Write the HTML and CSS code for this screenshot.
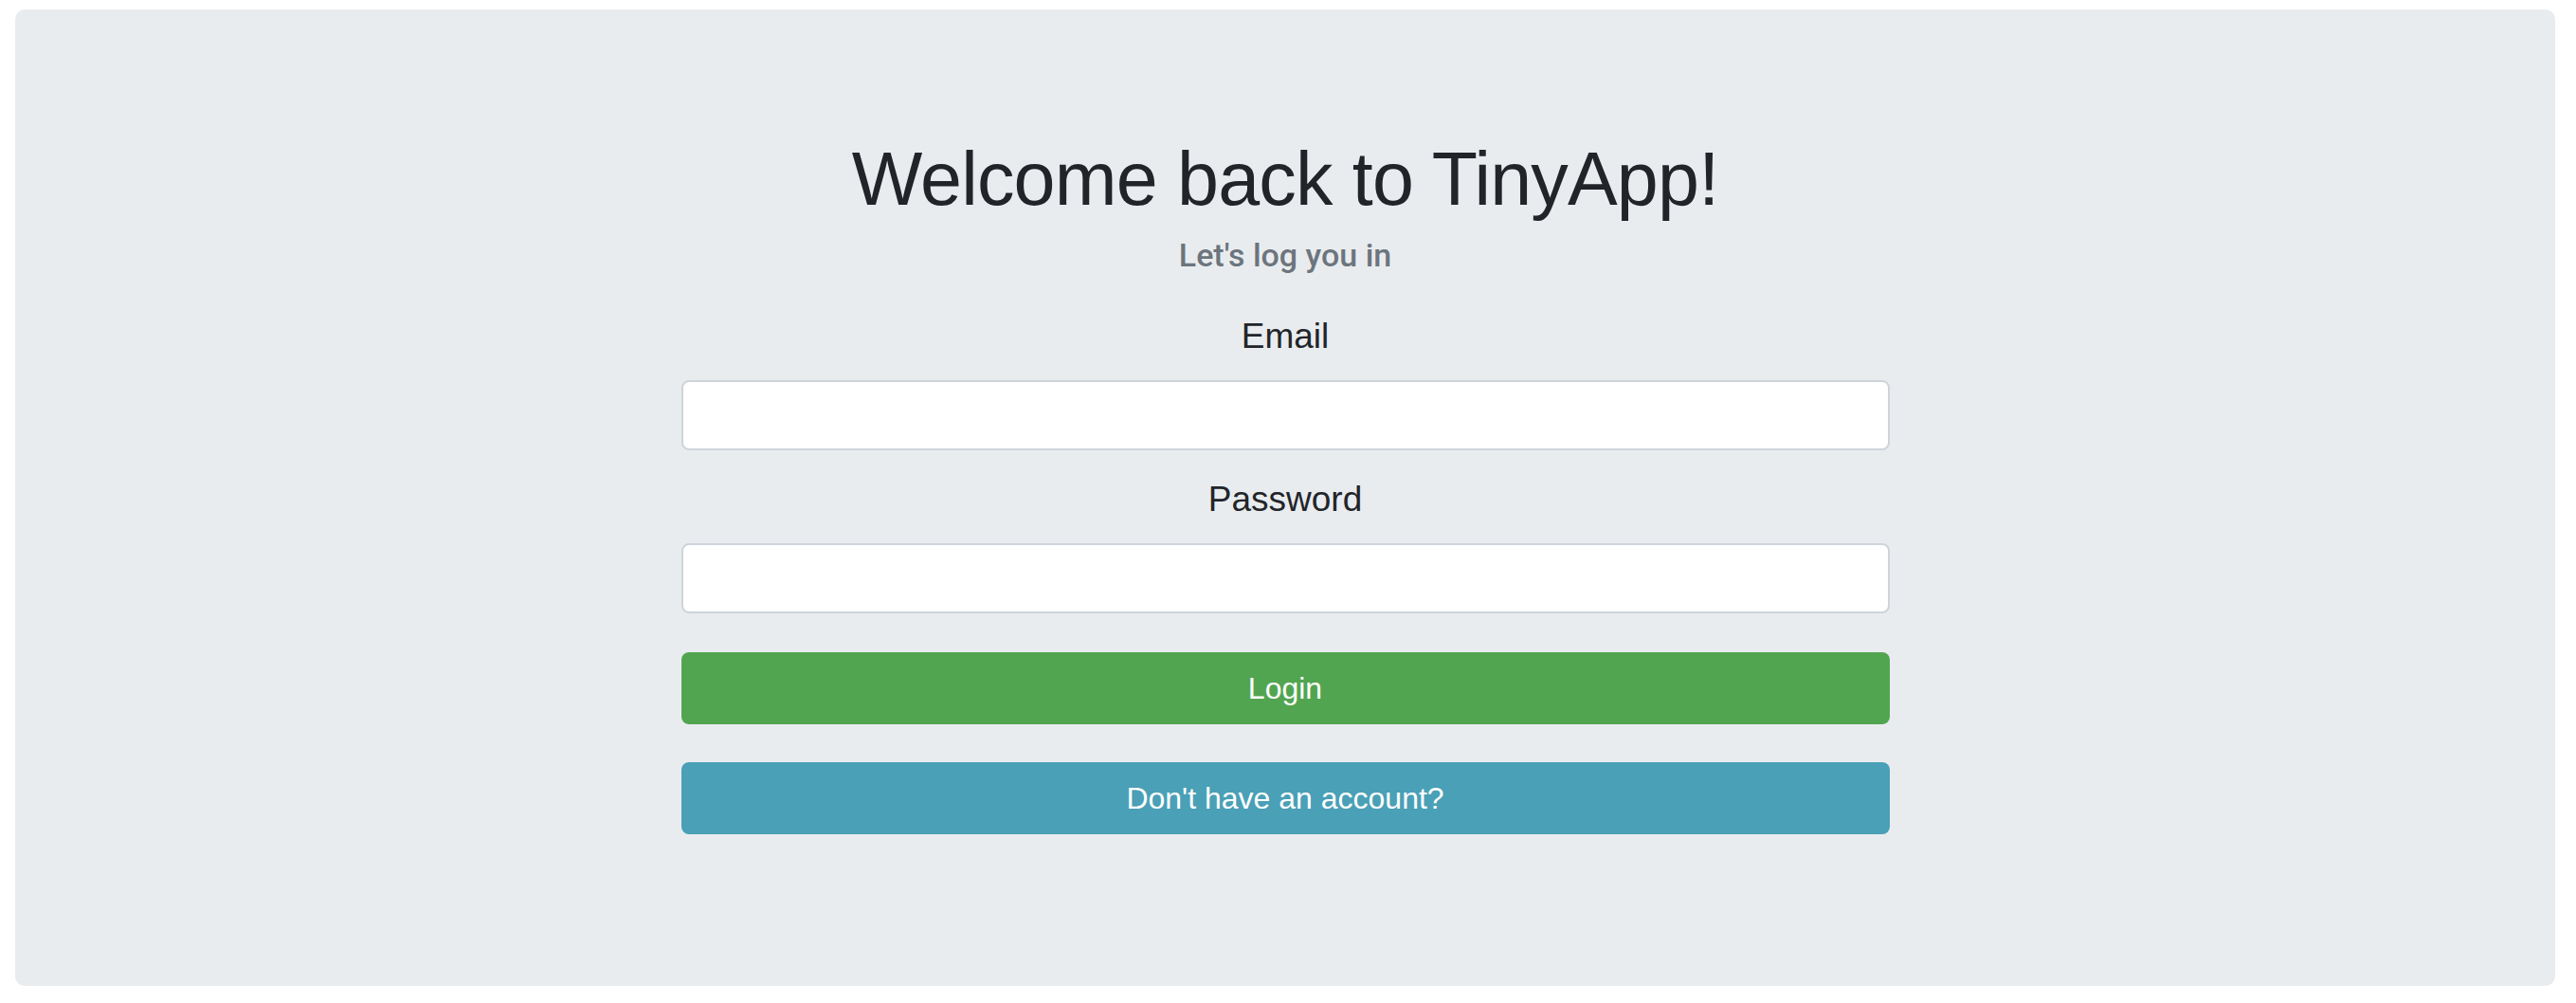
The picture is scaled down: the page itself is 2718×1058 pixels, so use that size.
FILE: index.html
```html
<!DOCTYPE html>
<html lang="en">
<head>
<meta charset="utf-8">
<title>TinyApp - Login</title>
<link rel="stylesheet" href="styles.css">
</head>
<body>
  <main class="jumbotron">
    <h1 class="title">Welcome back to TinyApp!</h1>
    <p class="subtitle">Let's log you in</p>
    <form class="login-form">
      <label class="field-label" for="email">Email</label>
      <input class="field-input" type="email" id="email" name="email">
      <label class="field-label field-label-next" for="password">Password</label>
      <input class="field-input" type="password" id="password" name="password">
      <button class="btn btn-success" type="submit">Login</button>
      <a class="btn btn-info" href="#">Don't have an account?</a>
    </form>
  </main>
</body>
</html>
```

FILE: styles.css
```css
html, body {
  margin: 0;
  padding: 0;
  background: #ffffff;
}

body {
  font-family: "Liberation Sans", Arial, sans-serif;
  color: #212529;
}

.jumbotron {
  box-sizing: border-box;
  margin: 10px 22px 0 16px;
  height: 1030px;
  padding: 132px 0 0;
  background: #e9ecef;
  border-radius: 10px;
  display: flex;
  flex-direction: column;
  align-items: center;
}

.title {
  margin: 0;
  font-size: 79px;
  line-height: 94px;
  font-weight: 400;
  letter-spacing: -0.8px;
  color: #212529;
}

.subtitle {
  margin: 8px 0 0;
  font-family: Roboto, "Liberation Sans", sans-serif;
  font-weight: 500;
  font-size: 34px;
  line-height: 50px;
  color: #6c757d;
}

.login-form {
  margin-top: 33px;
  width: 1275px;
  display: flex;
  flex-direction: column;
  align-items: stretch;
}

.field-label {
  display: block;
  text-align: center;
  font-size: 37px;
  line-height: 56px;
  color: #212529;
}

.field-label-next {
  margin-top: 24px;
}

.field-input {
  box-sizing: border-box;
  display: block;
  margin-top: 18px;
  width: 100%;
  height: 74px;
  border: 2px solid #ced4da;
  border-radius: 8px;
  background: #ffffff;
  font-family: inherit;
  font-size: 32px;
  padding: 0 20px;
}

.btn {
  box-sizing: border-box;
  display: flex;
  align-items: center;
  justify-content: center;
  width: 100%;
  height: 76px;
  border: none;
  border-radius: 8px;
  color: #ffffff;
  font-family: "Liberation Sans", Arial, sans-serif;
  font-size: 32px;
  text-decoration: none;
  cursor: pointer;
}

.btn-success {
  margin-top: 41px;
  background: #52a550;
}

.btn-info {
  margin-top: 40px;
  background: #4aa0b6;
}
```
